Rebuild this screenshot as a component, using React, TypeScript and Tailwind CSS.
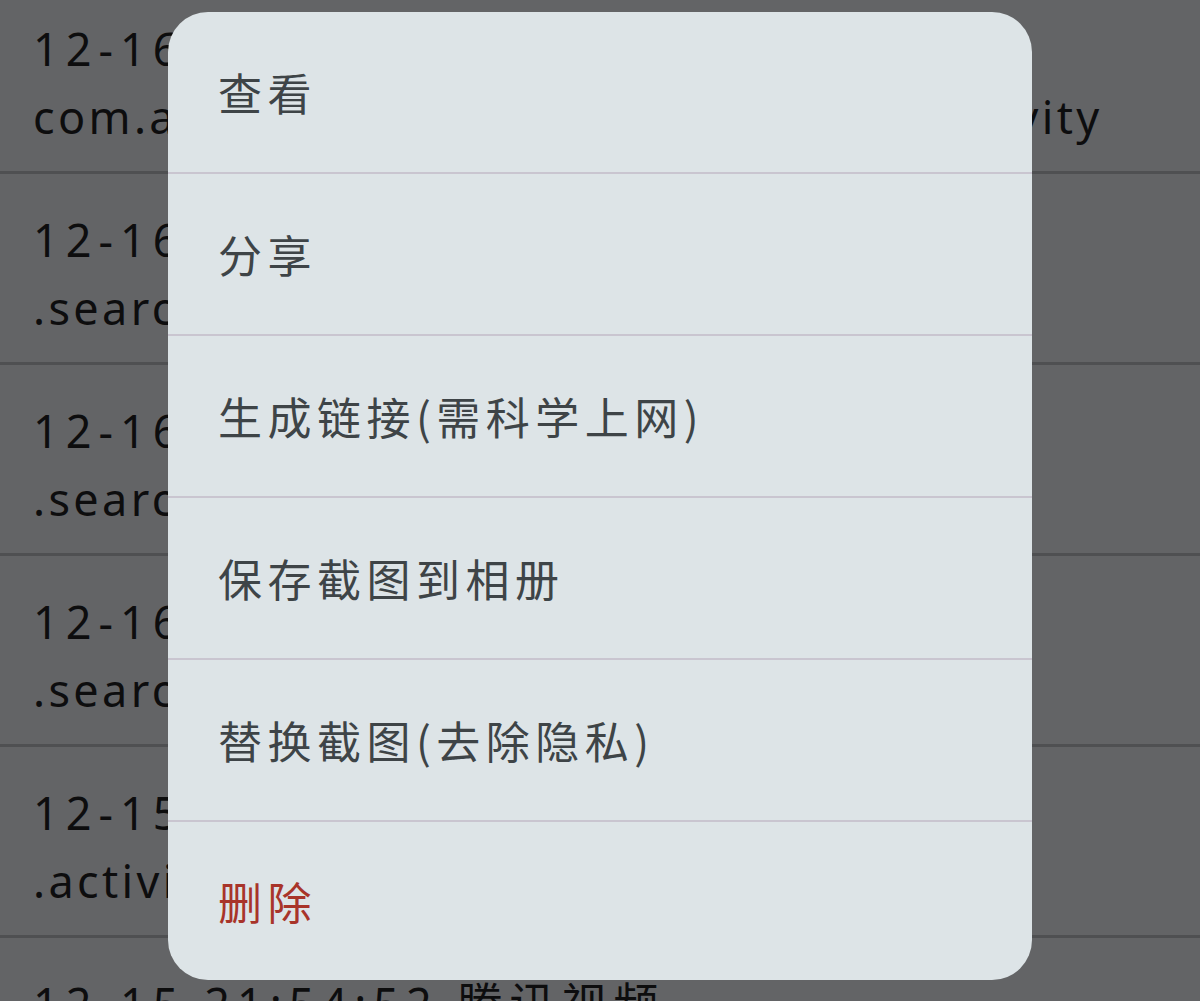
import React from 'react';

const records = [
  { time: '12-16 10:21:37 设置', pkg: 'com.android.settings.SearchSettingsActivity' },
  { time: '12-16 10:18:05 百度', pkg: '.search.SearchActivity' },
  { time: '12-16 10:17:42 百度', pkg: '.search.SearchActivity' },
  { time: '12-16 10:16:11 百度', pkg: '.search.SearchActivity' },
  { time: '12-15 22:03:19 微信', pkg: '.activity.MainActivity' },
  { time: '12-15 21:54:52 腾讯视频', pkg: '.activity.DetailActivity' },
];

const actions = ['查看', '分享', '生成链接(需科学上网)', '保存截图到相册', '替换截图(去除隐私)'];

export default function App() {
  return (
    <div
      className="relative w-[1200px] h-[1001px] overflow-hidden bg-[#636466]"
      style={{ fontFamily: '"Noto Sans", "Noto Sans CJK SC", sans-serif' }}
    >
      {/* list behind the dim layer */}
      <div className="-mt-[17px] flex flex-col">
        {records.map((r, i) => (
          <div key={i} className="h-[191px] border-b-[3px] border-[#4f5052] pl-[33px] pt-[32px] text-[#0d0d0e] text-[45px] leading-[68px] whitespace-nowrap">
            <div className="tracking-[7px]">{r.time}</div>
            <div className="tracking-[3.35px]">{r.pkg}</div>
          </div>
        ))}
      </div>

      {/* action sheet */}
      <div
        className="absolute left-[168px] top-[12px] w-[864px] h-[968px] rounded-[40px] bg-[#dde4e7] overflow-hidden flex flex-col"
        style={{ fontFamily: '"Noto Sans CJK SC", sans-serif' }}
      >
        {actions.map((a) => (
          <div key={a} className="h-[162px] shrink-0 border-b-[2px] border-[#c9c5d0] flex items-center pl-[50px] text-[44px] tracking-[5.5px] text-[#3e4447]">
            {a}
          </div>
        ))}
        <div className="flex-1 flex items-center pl-[50px] text-[44px] tracking-[5.5px] text-[#a8342a]">删除</div>
      </div>
    </div>
  );
}
